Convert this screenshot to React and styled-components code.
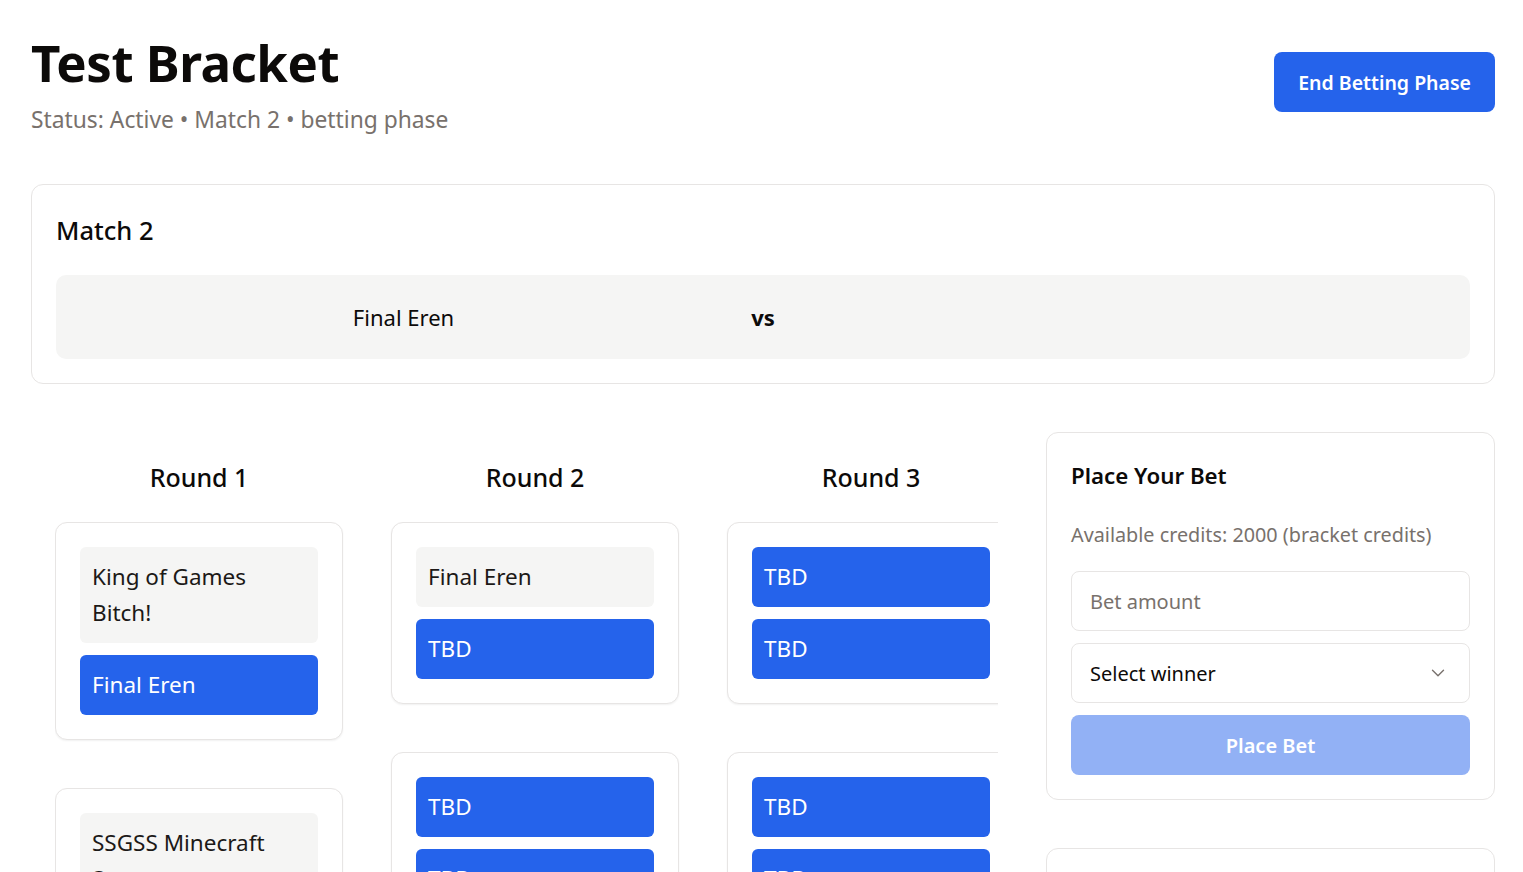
import styled, { createGlobalStyle } from "styled-components";
import { ChevronDown } from "lucide-react";

const GlobalStyle = createGlobalStyle`
  * {
    box-sizing: border-box;
  }

  body {
    margin: 0;
    background: #ffffff;
    color: #0c0a09;
    font-family: "Noto Sans", "Open Sans", sans-serif;
  }
`;

const Page = styled.div`
  padding: 32px 28px 32px 31px;
`;

const Header = styled.header`
  display: flex;
  align-items: flex-start;
  justify-content: space-between;
  margin-bottom: 48px;
`;

const Title = styled.h1`
  margin: 0;
  font-size: 51px;
  line-height: 60px;
  font-weight: 700;
  letter-spacing: -0.5px;
`;

const Subtitle = styled.div`
  margin-top: 12px;
  font-size: 22.8px;
  line-height: 32px;
  color: #78716c;
`;

const PrimaryButton = styled.button`
  margin-top: 20px;
  height: 60px;
  padding: 0 24px;
  border: none;
  border-radius: 8px;
  background: #2563eb;
  color: #ffffff;
  font-family: inherit;
  font-size: 19.5px;
  font-weight: 600;
`;

const Card = styled.section`
  border: 1px solid #e7e5e4;
  border-radius: 12px;
  background: #ffffff;
  padding: 24px;
`;

const MatchTitle = styled.h2`
  margin: 0 0 24px;
  font-size: 25.5px;
  line-height: 42px;
  font-weight: 500;
`;

const VersusRow = styled.div`
  display: flex;
  align-items: center;
  gap: 16px;
  padding: 24px 16px;
  border-radius: 10px;
  background: #f5f5f4;
`;

const VersusName = styled.div`
  flex: 1;
  text-align: center;
  font-size: 22px;
  line-height: 36px;
`;

const VersusLabel = styled.div`
  width: 24px;
  font-size: 22px;
  line-height: 36px;
  font-weight: 700;
  text-align: center;
`;

const Lower = styled.div`
  display: grid;
  grid-template-columns: minmax(0, 1fr) 449px;
  gap: 24px;
  margin-top: 48px;
`;

const BracketArea = styled.div`
  padding: 0 24px;
  min-width: 0;
`;

const BracketScroll = styled.div`
  overflow: hidden;
`;

const Rounds = styled.div`
  display: flex;
  gap: 48px;
  width: max-content;
`;

const RoundColumn = styled.div`
  width: 288px;
  display: flex;
  flex-direction: column;
`;

const RoundTitle = styled.h3`
  margin: 28px 0 28px;
  text-align: center;
  font-size: 25px;
  line-height: 34px;
  font-weight: 500;
`;

const Matches = styled.div`
  display: flex;
  flex-direction: column;
  gap: 48px;
`;

const MatchCard = styled.div`
  display: flex;
  flex-direction: column;
  gap: 12px;
  padding: 24px;
  border: 1px solid #e7e5e4;
  border-radius: 12px;
  background: #ffffff;
  box-shadow: 0 1px 2px rgba(0, 0, 0, 0.06);
`;

const Slot = styled.div`
  padding: 12px;
  border-radius: 6px;
  font-size: 22.5px;
  line-height: 36px;
  background: ${(p) => (p.$winner ? "#2563eb" : "#f5f5f4")};
  color: ${(p) => (p.$winner ? "#ffffff" : "#1c1917")};
`;

const Sidebar = styled.aside`
  display: flex;
  flex-direction: column;
  gap: 48px;
`;

const BetTitle = styled.h3`
  margin: 0 0 24px;
  font-size: 22.3px;
  line-height: 38px;
  font-weight: 600;
`;

const Credits = styled.p`
  margin: 0 0 20px;
  font-size: 19.8px;
  line-height: 32px;
  color: #78716c;
`;

const Form = styled.div`
  display: flex;
  flex-direction: column;
  gap: 12px;
`;

const Field = styled.div`
  display: flex;
  align-items: center;
  justify-content: space-between;
  height: 60px;
  padding: 0 20px 0 18px;
  border: 1px solid #e7e5e4;
  border-radius: 8px;
  font-size: 20px;
  color: ${(p) => (p.$placeholder ? "#78716c" : "#0c0a09")};
  svg {
    color: #78716c;
  }
`;

const DisabledButton = styled.button`
  height: 60px;
  border: none;
  border-radius: 8px;
  background: #92b1f5;
  color: #ffffff;
  font-family: inherit;
  font-size: 20px;
  font-weight: 600;
`;

const rounds = [
  {
    name: "Round 1",
    matches: [
      ["King of Games Bitch!", "Final Eren", 1],
      ["SSGSS Minecraft Steve", "TBD", -1],
    ],
  },
  {
    name: "Round 2",
    matches: [
      ["Final Eren", "TBD", 1],
      ["TBD", "TBD", 2],
    ],
  },
  {
    name: "Round 3",
    matches: [
      ["TBD", "TBD", 2],
      ["TBD", "TBD", 2],
    ],
  },
];

function App() {
  return (
    <Page>
      <GlobalStyle />
      <Header>
        <div>
          <Title>Test Bracket</Title>
          <Subtitle>Status: Active • Match 2 • betting phase</Subtitle>
        </div>
        <PrimaryButton>End Betting Phase</PrimaryButton>
      </Header>

      <Card>
        <MatchTitle>Match 2</MatchTitle>
        <VersusRow>
          <VersusName>Final Eren</VersusName>
          <VersusLabel>vs</VersusLabel>
          <VersusName></VersusName>
        </VersusRow>
      </Card>

      <Lower>
        <BracketArea>
          <BracketScroll>
            <Rounds>
              {rounds.map((round) => (
                <RoundColumn key={round.name}>
                  <RoundTitle>{round.name}</RoundTitle>
                  <Matches>
                    {round.matches.map(([a, b, blue], i) => (
                      <MatchCard key={i}>
                        <Slot $winner={blue === 2}>{a}</Slot>
                        <Slot $winner={blue >= 1}>{b}</Slot>
                      </MatchCard>
                    ))}
                  </Matches>
                </RoundColumn>
              ))}
            </Rounds>
          </BracketScroll>
        </BracketArea>

        <Sidebar>
          <Card>
            <BetTitle>Place Your Bet</BetTitle>
            <Credits>Available credits: 2000 (bracket credits)</Credits>
            <Form>
              <Field $placeholder>Bet amount</Field>
              <Field>
                Select winner
                <ChevronDown size={22} strokeWidth={1.5} />
              </Field>
              <DisabledButton>Place Bet</DisabledButton>
            </Form>
          </Card>
          <Card style={{ height: 200 }} />
        </Sidebar>
      </Lower>
    </Page>
  );
}

export default App;
